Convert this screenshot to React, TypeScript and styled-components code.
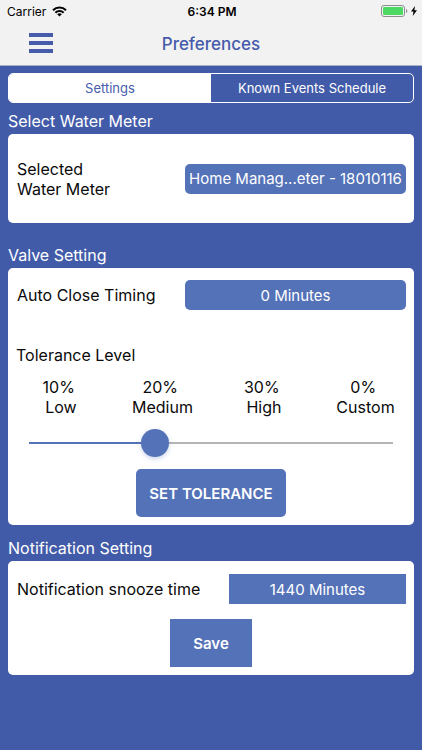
import { useState } from 'react'
import styled, { createGlobalStyle, css, ThemeProvider } from 'styled-components'

const theme = {
	colors: {
		page: '#425ba9',
		bar: '#f2f2f2',
		accent: '#5472b8',
		title: '#465cab',
		text: '#0a0a0a',
		surface: '#ffffff',
		line: '#b4b5b6',
	},
	font: {
		family: "Inter, 'Liberation Sans', sans-serif",
		size: { xs: '12px', sm: '13px', md: '15px', base: '16px', lg: '17px' },
	},
	radii: '5px',
}

const GlobalStyle = createGlobalStyle`
	*,
	*::before,
	*::after {
		box-sizing: border-box;
	}

	body {
		margin: 0;
		background-color: ${theme.colors.page};
		color: ${theme.colors.text};
		font-family: ${theme.font.family};
		font-size: ${theme.font.size.base};
	}

	button,
	select,
	input {
		margin: 0;
		font-family: inherit;
	}
`

const Header = styled.header`
	background-color: ${({ theme }) => theme.colors.bar};
	border-bottom: 1px solid #a9b0c8;
`

const StatusBar = styled.div`
	display: grid;
	grid-template-columns: 1fr auto 1fr;
	align-items: center;
	height: 22px;
	padding: 0 5px 0 7px;
	font-size: ${({ theme }) => theme.font.size.xs};
	color: #000;
`

const StatusGroup = styled.div<{ $end?: boolean }>`
	display: flex;
	align-items: center;
	justify-content: ${({ $end }) => ($end ? 'flex-end' : 'flex-start')};
	gap: ${({ $end }) => ($end ? '3px' : '6px')};
`

const Time = styled.time`
	font-weight: 600;
`

const NavBar = styled.div`
	display: grid;
	grid-template-columns: 1fr auto 1fr;
	align-items: center;
	height: 43px;
	padding: 0 28px;
`

const MenuButton = styled.button`
	display: flex;
	justify-self: start;
	padding: 0;
	border: none;
	background: none;
	cursor: pointer;
`

const Title = styled.h1`
	margin: 0;
	font-size: ${({ theme }) => theme.font.size.lg};
	font-weight: 500;
	line-height: 20px;
	color: ${({ theme }) => theme.colors.title};
`

const Main = styled.main`
	padding: 7px 8px 24px;
`

const Tabs = styled.div`
	display: grid;
	grid-template-columns: 1fr 1fr;
	height: 30px;
	border: 1px solid ${({ theme }) => theme.colors.surface};
	border-radius: ${({ theme }) => theme.radii};
	overflow: hidden;
`

const Tab = styled.button<{ $active: boolean }>`
	padding: 0;
	border: none;
	background-color: ${({ theme, $active }) =>
		$active ? theme.colors.surface : 'transparent'};
	color: ${({ theme, $active }) =>
		$active ? theme.colors.title : theme.colors.surface};
	font-size: ${({ theme }) => theme.font.size.sm};
	cursor: pointer;
`

const Section = styled.section<{ $gap: number }>`
	margin-top: ${({ $gap }) => $gap}px;
`

const SectionTitle = styled.h2`
	margin: 0;
	font-size: ${({ theme }) => theme.font.size.base};
	font-weight: 400;
	line-height: 26px;
	color: ${({ theme }) => theme.colors.surface};
`

const Card = styled.div<{ $pad: number }>`
	padding: ${({ $pad }) => $pad}px 8px 8px;
	border-radius: ${({ theme }) => theme.radii};
	background-color: ${({ theme }) => theme.colors.surface};
`

const Row = styled.div<{ $tall?: boolean }>`
	display: flex;
	align-items: center;
	justify-content: space-between;
	min-height: ${({ $tall }) => ($tall ? '73px' : '30px')};
`

const Label = styled.label`
	padding-left: 1px;
	line-height: 20px;
`

const filled = css`
	border: none;
	background-color: ${({ theme }) => theme.colors.accent};
	color: ${({ theme }) => theme.colors.surface};
	font-size: ${({ theme }) => theme.font.size.md};
	cursor: pointer;
`

const Picker = styled.select<{ $narrow?: boolean }>`
	${filled}
	appearance: none;
	flex: none;
	width: ${({ $narrow }) => ($narrow ? '177px' : '221px')};
	height: 30px;
	padding: 0;
	border-radius: ${({ theme, $narrow }) => ($narrow ? 0 : theme.radii)};
	text-align: center;
	text-align-last: center;
`

const Action = styled.button<{ $square?: boolean }>`
	${filled}
	display: block;
	height: 48px;
	margin: 0 auto;
	padding: 0 ${({ $square }) => ($square ? '23px' : '13px')};
	border-radius: ${({ theme, $square }) => ($square ? 0 : theme.radii)};
	font-weight: 600;
`

const Subtitle = styled.h3`
	margin: 35px 0 12px;
	font-size: ${({ theme }) => theme.font.size.base};
	font-weight: 400;
	line-height: 20px;
`

const Levels = styled.div`
	display: grid;
	grid-template-columns: repeat(4, 1fr);
	margin: 0 -8px;
	line-height: 20px;
	text-align: center;
	white-space: pre;
`

const Slider = styled.input`
	appearance: none;
	display: block;
	width: calc(100% - 26px);
	height: 28px;
	margin: 12px 13px;
	background: linear-gradient(
			to right,
			${({ theme }) => theme.colors.accent} var(--fill),
			${({ theme }) => theme.colors.line} var(--fill)
		)
		center / 100% 2px no-repeat;

	&::-webkit-slider-thumb {
		appearance: none;
		width: 28px;
		height: 28px;
		border-radius: 50%;
		background-color: ${({ theme }) => theme.colors.accent};
		box-shadow: 0 2px 5px rgba(84, 114, 184, 0.3);
	}
`

const SaveRow = styled.div`
	margin-top: 15px;
`

const levels = [
	{ percent: '10%', name: 'Low' },
	{ percent: '20%', name: 'Medium' },
	{ percent: '30%', name: 'High' },
	{ percent: '0%', name: 'Custom' },
]

function WifiIcon() {
	return (
		<svg width="15" height="11" viewBox="0 0 15 11" aria-hidden="true">
			<g fill="none" stroke="#000" strokeWidth="2">
				<path d="M1 4.2a9.2 9.2 0 0 1 13 0" />
				<path d="M3.4 6.7a5.8 5.8 0 0 1 8.2 0" />
			</g>
			<path d="M7.5 10.6 5.2 8.3a3.3 3.3 0 0 1 4.6 0z" />
		</svg>
	)
}

function BatteryIcon() {
	return (
		<svg width="27" height="12" viewBox="0 0 27 12" aria-hidden="true">
			<rect
				x="0.5"
				y="0.5"
				width="23"
				height="11"
				rx="2.5"
				fill="none"
				stroke="#8e8e8e"
			/>
			<rect x="2" y="2" width="20" height="8" rx="1.2" fill="#4cd964" />
			<path d="M25 4v4c.8-.3 1.3-1.1 1.3-2S25.8 4.3 25 4z" fill="#8e8e8e" />
		</svg>
	)
}

function BoltIcon() {
	return (
		<svg width="6" height="10" viewBox="0 0 6 10" aria-hidden="true">
			<path d="M4 0 0 5.6h2.5L1.7 10 6 4.2H3.4z" />
		</svg>
	)
}

function MenuIcon() {
	return (
		<svg width="26" height="21" viewBox="0 0 26 21" aria-hidden="true">
			<path d="M1 0h24v4H1zM1 8h24v4H1zM1 16h24v4H1z" fill="#465cab" />
		</svg>
	)
}

export default function App() {
	const [tab, setTab] = useState(0)
	const [level, setLevel] = useState(1)

	return (
		<ThemeProvider theme={theme}>
			<GlobalStyle />
			<Header>
				<StatusBar>
					<StatusGroup>
						Carrier
						<WifiIcon />
					</StatusGroup>
					<Time>6:34 PM</Time>
					<StatusGroup $end>
						<BatteryIcon />
						<BoltIcon />
					</StatusGroup>
				</StatusBar>
				<NavBar>
					<MenuButton type="button" aria-label="Menu">
						<MenuIcon />
					</MenuButton>
					<Title>Preferences</Title>
				</NavBar>
			</Header>

			<Main>
				<Tabs role="tablist">
					{['Settings', 'Known Events Schedule'].map((name, i) => (
						<Tab
							key={name}
							type="button"
							role="tab"
							aria-selected={tab === i}
							$active={tab === i}
							onClick={() => setTab(i)}
						>
							{name}
						</Tab>
					))}
				</Tabs>

				<Section $gap={5}>
					<SectionTitle>Select Water Meter</SectionTitle>
					<Card $pad={8}>
						<Row $tall>
							<Label htmlFor="meter">
								Selected
								<br />
								Water Meter
							</Label>
							<Picker id="meter">
								<option>Home Manag...eter - 18010116</option>
							</Picker>
						</Row>
					</Card>
				</Section>

				<Section $gap={19}>
					<SectionTitle>Valve Setting</SectionTitle>
					<Card $pad={12}>
						<Row>
							<Label htmlFor="close-timing">Auto Close Timing</Label>
							<Picker id="close-timing">
								<option>0 Minutes</option>
							</Picker>
						</Row>
						<Subtitle id="tolerance">Tolerance Level</Subtitle>
						<Levels>
							{levels.map(({ percent, name }) => (
								<span key={name}>{`${percent}\n ${name}`}</span>
							))}
						</Levels>
						<Slider
							type="range"
							min={0}
							max={levels.length - 1}
							value={level}
							aria-labelledby="tolerance"
							onChange={e => setLevel(Number(e.target.value))}
							style={
								{
									'--fill': `${(level / (levels.length - 1)) * 100}%`,
								} as React.CSSProperties
							}
						/>
						<Action type="button">SET TOLERANCE</Action>
					</Card>
				</Section>

				<Section $gap={10}>
					<SectionTitle>Notification Setting</SectionTitle>
					<Card $pad={13}>
						<Row>
							<Label htmlFor="snooze">Notification snooze time</Label>
							<Picker id="snooze" $narrow>
								<option>1440 Minutes</option>
							</Picker>
						</Row>
						<SaveRow>
							<Action type="button" $square>
								Save
							</Action>
						</SaveRow>
					</Card>
				</Section>
			</Main>
		</ThemeProvider>
	)
}
